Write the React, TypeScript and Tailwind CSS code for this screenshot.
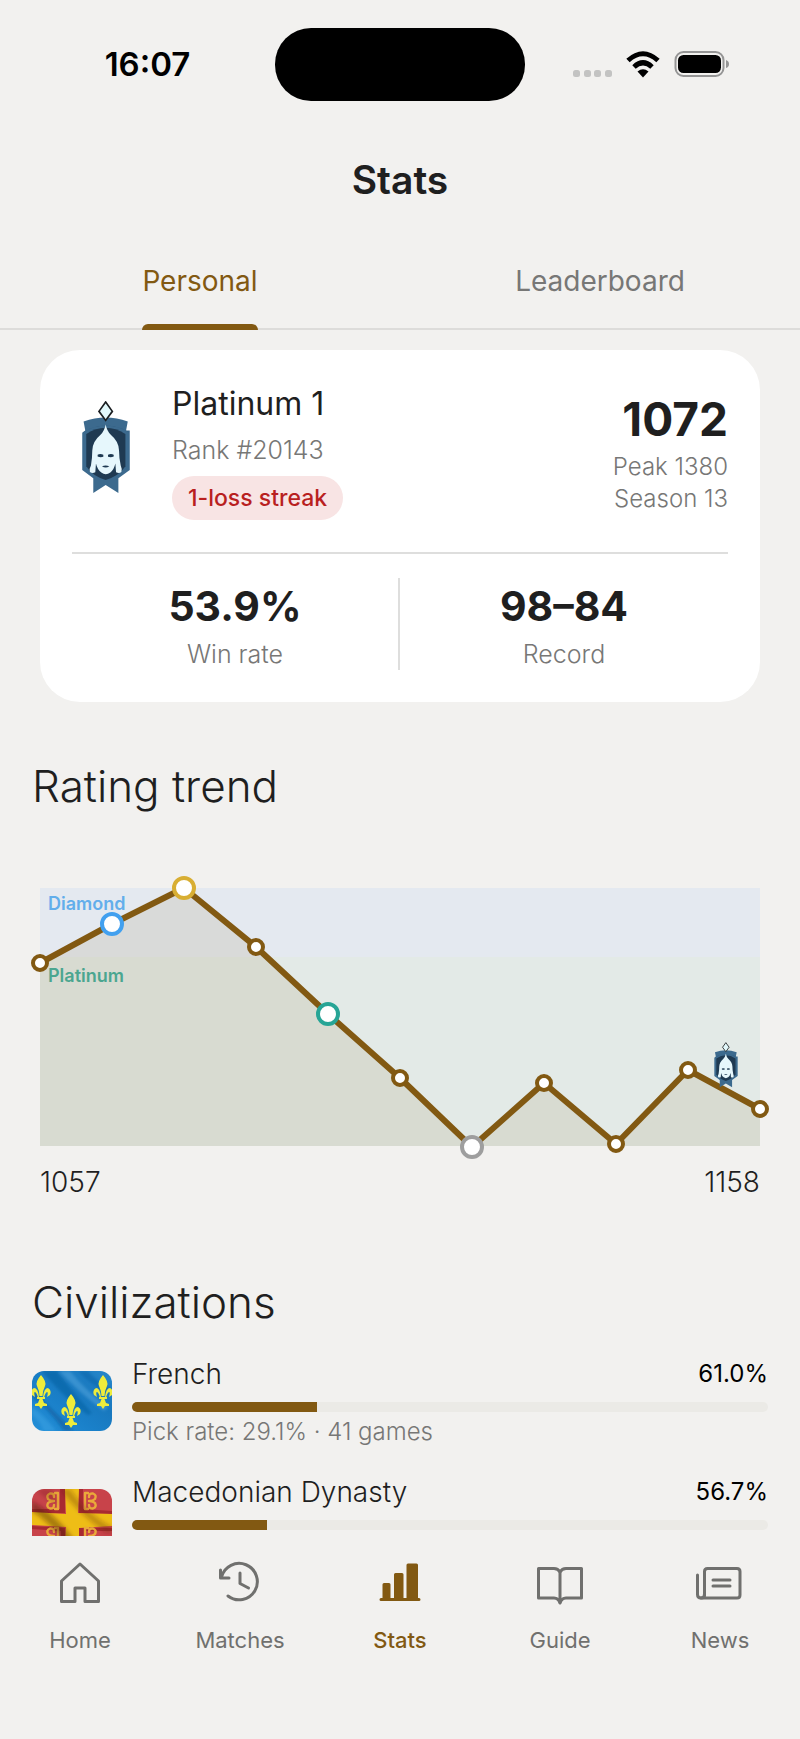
import type { ReactNode } from "react";

type Civ = {
  name: string;
  winRate: string;
  pickRate: number;
  games?: number;
  flag: ReactNode;
};

type TrendPoint = { x: number; y: number; tone?: string };

const trend: TrendPoint[] = [
  { x: 40, y: 93 },
  { x: 112, y: 54, tone: "#42a0ef" },
  { x: 184, y: 18, tone: "#d8ae33" },
  { x: 256, y: 77 },
  { x: 328, y: 144, tone: "#27a596" },
  { x: 400, y: 208 },
  { x: 472, y: 277, tone: "#9e9e9e" },
  { x: 544, y: 213 },
  { x: 616, y: 274 },
  { x: 688, y: 200 },
  { x: 760, y: 239 },
];

function RankBadgeArt() {
  return (
    <>
      <path d="M42 79Q108 55 174 79L169 106H180V224L146 249V293L108 269L71 293V249L38 224V113L47 106Z" fill="#3c6a8e" />
      <path d="M38 113L60 101Q108 82 158 101L180 113L172 108Q108 76 46 108Z" fill="#2d5677" />
      <path d="M50 117Q78 98 108 98T167 117V213Q148 242 108 254Q68 242 50 213Z" fill="#1f3a52" />
      <path d="M108 88Q111 106 124 120Q147 139 148 166Q148 188 153 211Q158 222 155 230Q149 236 139 231L137 205Q133 223 122 232Q108 242 95 232Q83 223 79 205L77 231Q68 236 61 230Q58 221 64 211Q68 188 68 166Q69 139 92 120Q105 106 108 88Z" fill="#e6f7fc" />
      <path d="M84 179Q92 174 101 179V185Q92 188 84 184ZM115 179Q124 174 132 179V184Q124 188 115 185ZM97 213Q108 209 119 213Q108 220 97 213Z" fill="#1f3a52" />
      <path d="M108 21L128 49L108 76L88 49Z" fill="#e2f8fb" stroke="#1a1d20" strokeWidth="5" />
    </>
  );
}

function FleurDeLis({ x, y }: { x: number; y: number }) {
  return (
    <g transform={`translate(${x} ${y})`} fill="#eeec3c">
      <path d="M0 0Q6 7 4 11Q1.500 16 1.500 21H-1.500Q-1.500 16 -4 11Q-6 7 0 0Z" />
      <path d="M2 22Q3 13 7 13Q11 15 9 20L6 22Q7.500 17 6 17Q4 18 3 23ZM-2 22Q-3 13 -7 13Q-11 15 -9 20L-6 22Q-7.500 17 -6 17Q-4 18 -3 23Z" />
      <path d="M-4 22H4V24H1.500L3 28L6 29L6 31L2 31L0 34L-2 31L-6 31L-6 29L-3 28L-1.500 24H-4Z" />
    </g>
  );
}

function FrenchFlag() {
  return (
    <svg viewBox="0 0 80 60" className="h-15 w-20 shrink-0 rounded-xl" aria-hidden="true">
      <defs>
        <linearGradient id="azure" x1="0" y1="1" x2="1" y2="0">
          <stop offset="0" stopColor="#2490d8" />
          <stop offset="0.4" stopColor="#1a80c9" />
          <stop offset="0.65" stopColor="#1878be" />
          <stop offset="1" stopColor="#2788cc" />
        </linearGradient>
        <filter id="azure-folds">
          <feGaussianBlur stdDeviation="1.5" />
        </filter>
      </defs>
      <rect width="80" height="60" fill="url(#azure)" />
      <g filter="url(#azure-folds)">
        <path d="M0 26Q15 36 32 60H42Q22 40 0 18Z" fill="#0d5c9c" opacity="0.6" />
        <path d="M10 0Q35 30 56 44L60 42Q42 22 24 0Z" fill="#0c5b9d" opacity="0.5" />
        <path d="M27 0Q46 21 72 40L76 36Q54 20 38 0Z" fill="#5db0e4" opacity="0.45" />
        <path d="M46 0Q58 14 80 24V18Q64 10 56 0Z" fill="#0c5b9d" opacity="0.4" />
        <path d="M0 36Q12 44 24 60H12Q8 50 0 44Z" fill="#46a9e8" opacity="0.4" />
      </g>
      <FleurDeLis x={9} y={4} />
      <FleurDeLis x={71} y={4} />
      <FleurDeLis x={39} y={23} />
    </svg>
  );
}

function FireSteel({ transform }: { transform: string }) {
  return (
    <path
      transform={transform}
      d="M-5 -8V8M-5 -8H-2M-5 8H-2M-1 -4Q-1 -8 3 -7.500Q7 -6 5 -2Q3 0 -1 0Q3 0 5 2Q7 6 3 7.500Q-1 8 -1 4"
      fill="none"
      stroke="#eaa93a"
      strokeWidth="2.4"
      strokeLinecap="round"
      strokeLinejoin="round"
    />
  );
}

function MacedonianFlag() {
  return (
    <svg viewBox="0 0 80 60" className="h-15 w-20 shrink-0 rounded-xl" aria-hidden="true">
      <defs>
        <filter id="cross-folds">
          <feGaussianBlur stdDeviation="2" />
        </filter>
      </defs>
      <rect width="80" height="60" fill="#c8434a" />
      <path d="M28 0H33V24H0V20H28ZM47 0H51V20L80 22V25L47 24ZM0 37L33 39V60H29V42L0 40ZM47 39H80V42H52V60H47Z" fill="#a82a31" />
      <path d="M33 0H47L46 24L80 25V37L47 39V60H33L34 38L0 36V23L34 25Z" fill="#eebd16" />
      <FireSteel transform="translate(21 12) scale(-1 1)" />
      <FireSteel transform="translate(58 12)" />
      <FireSteel transform="translate(21 47) scale(-1 1)" />
      <FireSteel transform="translate(58 47)" />
      <g filter="url(#cross-folds)">
        <path d="M0 12Q22 24 40 48L48 60H36Q22 36 0 22Z" fill="#3f1408" opacity="0.4" />
        <path d="M28 0Q44 22 74 44L80 44V38Q56 26 38 0Z" fill="#5a2406" opacity="0.3" />
        <path d="M4 0Q10 8 26 16L20 0Z" fill="#3f1408" opacity="0.2" />
      </g>
    </svg>
  );
}

const civs: Civ[] = [
  { name: "French", winRate: "61.0%", pickRate: 29.1, games: 41, flag: <FrenchFlag /> },
  { name: "Macedonian Dynasty", winRate: "56.7%", pickRate: 21.3, flag: <MacedonianFlag /> },
];

function StatusBar() {
  return (
    <div className="grid h-32 shrink-0 grid-cols-[1fr_250px_1fr] items-center text-black">
      <div className="pl-5 text-center text-[33px] leading-10 font-semibold">16:07</div>
      <div className="h-[73px] rounded-[36px] bg-black" />
      <div className="flex items-center justify-center pr-6">
        <svg viewBox="0 0 158 32" className="h-8 w-[158px]" aria-hidden="true">
          <g fill="#c3c3c2">
            <rect x="1" y="22" width="7" height="7" rx="2.5" />
            <rect x="12" y="22" width="7" height="7" rx="2.5" />
            <rect x="22" y="22" width="7" height="7" rx="2.5" />
            <rect x="33" y="22" width="7" height="7" rx="2.5" />
          </g>
          <g fill="none" stroke="#000" strokeWidth="5">
            <path d="M56 12.5Q71 -1 86 12.5" />
            <path d="M62 19Q71 10.500 80 19" />
          </g>
          <path d="M65.500 23.500Q71 19 76.500 23.500L71 29.500Z" fill="#000" />
          <rect x="103.500" y="4" width="48" height="24" rx="8" fill="none" stroke="#959595" strokeWidth="2" />
          <rect x="106" y="7" width="43" height="18" rx="5.500" fill="#000" />
          <path d="M154 12Q157 13 157 16T154 20Z" fill="#959595" />
        </svg>
      </div>
    </div>
  );
}

function RankCard() {
  return (
    <section className="mx-10 mt-5 rounded-[40px] bg-white p-8">
      <div className="flex items-center gap-8 border-b-2 border-[#dededd] pb-8">
        <svg viewBox="36 18 146 278" className="mb-2 h-[93px] w-[68px] shrink-0" aria-label="Platinum badge">
          <RankBadgeArt />
        </svg>
        <div className="flex flex-1 flex-col items-start">
          <h2 className="text-[32px] leading-11">Platinum 1</h2>
          <p className="mt-1 text-[25px] leading-10 font-light text-[#777776]">Rank #20143</p>
          <span className="mt-[6px] rounded-full bg-[#f8e4e4] px-4 text-[23px] leading-11 font-medium text-[#b91f1f]">
            1-loss streak
          </span>
        </div>
        <div className="text-right text-2xl leading-8 font-light text-[#777776]">
          <p className="text-[46px] leading-16 font-bold text-[#1f1f1f]">1072</p>
          <p>Peak 1380</p>
          <p>Season 13</p>
        </div>
      </div>
      <dl className="grid grid-cols-2 pt-6 text-center">
        <div className="flex flex-col-reverse gap-1 border-r-2 border-[#dededd]">
          <dt className="text-[25px] leading-8 font-light text-[#777776]">Win rate</dt>
          <dd className="text-[41px] leading-14 font-bold">53.9%</dd>
        </div>
        <div className="flex flex-col-reverse gap-1">
          <dt className="text-[25px] leading-8 font-light text-[#777776]">Record</dt>
          <dd className="text-[41px] leading-14 font-bold">98–84</dd>
        </div>
      </dl>
    </section>
  );
}

function TrendChart() {
  const line = trend.map((p) => `${p.x},${p.y}`).join(" ");
  return (
    <svg viewBox="0 0 800 292" className="mt-14 block w-full" role="img" aria-label="Rating trend">
      <rect x="40" y="18" width="720" height="258" fill="#e3eae7" />
      <rect x="40" y="18" width="720" height="69" fill="#e4e9f0" />
      <polygon points={`40,276 ${line} 760,276`} fill="#825912" fillOpacity="0.1" />
      <text x="48" y="40" fontSize="18" fontWeight="600" fill="#62aeeb">Diamond</text>
      <text x="48" y="112" fontSize="18" fontWeight="600" fill="#4ba690">Platinum</text>
      <polyline points={line} fill="none" stroke="#825912" strokeWidth="6" strokeLinejoin="round" />
      {trend.map((p) => (
        <circle
          key={p.x}
          cx={p.x}
          cy={p.y}
          r={p.tone ? 10 : 7}
          fill="#fff"
          stroke={p.tone ?? "#825912"}
          strokeWidth="4"
        />
      ))}
      <svg x="714" y="172" width="24" height="46" viewBox="36 18 146 278">
        <RankBadgeArt />
      </svg>
    </svg>
  );
}

function CivRow({ civ }: { civ: Civ }) {
  return (
    <li className="flex items-center gap-5">
      {civ.flag}
      <div className="min-w-0 flex-1">
        <div className="flex items-center justify-between">
          <h3 className="text-[28px] leading-10 font-light">{civ.name}</h3>
          <span className="text-2xl leading-10 text-black">{civ.winRate}</span>
        </div>
        <div className="mt-2 h-[10px] overflow-hidden rounded-full bg-[#ebeae6]">
          <div className="h-full bg-[#825912]" style={{ width: `${civ.pickRate}%` }} />
        </div>
        <p className="mt-1 h-8 text-2xl leading-8 font-light text-[#777776]">
          {civ.games !== undefined && `Pick rate: ${civ.pickRate}% · ${civ.games} games`}
        </p>
      </div>
    </li>
  );
}

const navItems: { label: string; art: ReactNode }[] = [
  {
    label: "Home",
    art: <path d="M24 4L42.500 21V41.500H29V28H19V41.500H5.500V21Z" />,
  },
  {
    label: "Matches",
    art: (
      <>
        <path d="M4.500 10V18H13" />
        <path d="M5.500 17A18.200 18.200 0 1 1 12 36" />
        <path d="M24 13V23.500L32.500 28" />
      </>
    ),
  },
  {
    label: "Stats",
    art: (
      <path
        d="M5 39.500H43M8 24.500H13V39H8ZM19.500 14.500H26V39H19.500ZM32 5H40.500V39H32Z"
        fill="currentColor"
      />
    ),
  },
  {
    label: "Guide",
    art: (
      <>
        <path d="M24 12Q22 8.500 18 8.500H2.500V38H18Q22.500 38 24 43Q25.500 38 30 38H45.500V8.500H30Q26 8.500 24 12Z" />
        <path d="M24 12V42" />
      </>
    ),
  },
  {
    label: "News",
    art: (
      <>
        <path d="M8.500 35.500V11.500Q8.500 8.500 11.500 8.500H41Q44 8.500 44 11.500V35Q44 38 41 38H5Q1.500 38 1.500 34.500V15" />
        <path d="M8.500 34Q8.500 38 5 38M17 20H34M17 26H34" />
      </>
    ),
  },
];

function BottomNav() {
  return (
    <nav className="grid shrink-0 grid-cols-5 pt-6 pb-[83px]">
      {navItems.map((item) => {
        const active = item.label === "Stats";
        return (
          <a
            key={item.label}
            href={`#${item.label.toLowerCase()}`}
            aria-current={active ? "page" : undefined}
            className={
              active
                ? "flex flex-col items-center gap-4 font-medium text-[#825912]"
                : "flex flex-col items-center gap-4 text-[#70706e]"
            }
          >
            <svg
              viewBox="0 0 48 48"
              className="size-12"
              fill="none"
              stroke="currentColor"
              strokeWidth="3"
              strokeLinecap="round"
              strokeLinejoin="round"
              aria-hidden="true"
            >
              {item.art}
            </svg>
            <span className="text-[22px] leading-8">{item.label}</span>
          </a>
        );
      })}
    </nav>
  );
}

export default function App() {
  return (
    <div className="flex h-screen flex-col bg-[#f2f1ef] font-['Inter',sans-serif] text-[#1f1f1f]">
      <StatusBar />
      <header className="shrink-0">
        <h1 className="flex h-26 items-center justify-center text-[39px] font-semibold">Stats</h1>
        <div role="tablist" className="flex h-[98px] border-b-2 border-[#dddcda] text-[28px]">
          <div className="flex flex-1 justify-center">
            <button role="tab" aria-selected="true" className="relative -mb-[2px] text-[#825912]">
              Personal
              <span className="absolute inset-x-0 bottom-0 h-[6px] rounded-t-md bg-[#825912]" />
            </button>
          </div>
          <div className="flex flex-1 justify-center">
            <button role="tab" aria-selected="false" className="-mb-[2px] text-[#777776]">
              Leaderboard
            </button>
          </div>
        </div>
      </header>
      <main className="min-h-0 flex-1 overflow-y-auto [scrollbar-width:none]">
        <RankCard />
        <section className="mt-14">
          <h2 className="px-8 text-[44px] leading-14 font-light">Rating trend</h2>
          <TrendChart />
          <div className="flex justify-between px-10 text-[28px] leading-10 font-light">
            <span>1057</span>
            <span>1158</span>
          </div>
        </section>
        <section className="mt-18 px-8">
          <h2 className="text-[44px] leading-14 font-light">Civilizations</h2>
          <ul className="mt-6 flex flex-col gap-6">
            {civs.map((civ) => (
              <CivRow key={civ.name} civ={civ} />
            ))}
          </ul>
        </section>
      </main>
      <BottomNav />
    </div>
  );
}
